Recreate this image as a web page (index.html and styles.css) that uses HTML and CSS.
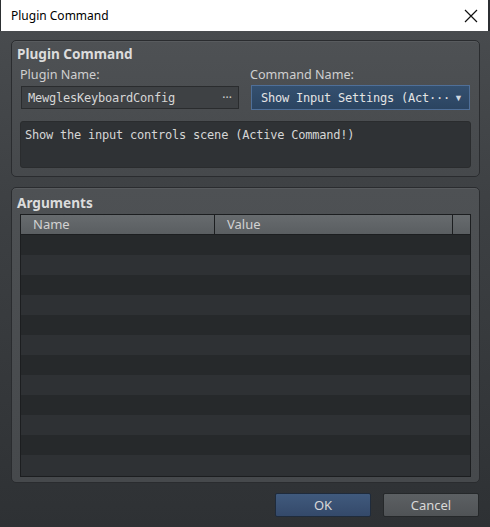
FILE: index.html
```html
<html>
<head>
<link rel="stylesheet" href="styles.css">
</head>
<body>
<div class="window">
    <div class="titlebar">
        <span class="caption">Plugin Command</span>
        <svg class="close" width="14" height="14" viewBox="0 0 14 14"><path d="M1 1 L13 13 M13 1 L1 13" stroke="#111" stroke-width="1.2" fill="none"/></svg>
    </div>
    <div class="dialog">
        <div class="panel command">
            <h2>Plugin Command</h2>
            <div class="fields">
                <div class="field plugin">
                    <label>Plugin Name:</label>
                    <div class="input">
                        <span class="mono">MewglesKeyboardConfig</span>
                        <span class="dots">···</span>
                    </div>
                </div>
                <div class="field cmd">
                    <label>Command Name:</label>
                    <div class="select">
                        <span class="mono">Show Input Settings (Act···</span>
                        <span class="arrow">▼</span>
                    </div>
                </div>
            </div>
            <div class="description mono">Show the input controls scene (Active Command!)</div>
        </div>
        <div class="panel args">
            <h2>Arguments</h2>
            <div class="table">
                <div class="thead">
                    <div class="th name">Name</div>
                    <div class="th value">Value</div>
                    <div class="th corner"></div>
                </div>
                <div class="tbody">
                    <div class="row"></div><div class="row"></div><div class="row"></div>
                    <div class="row"></div><div class="row"></div><div class="row"></div>
                    <div class="row"></div><div class="row"></div><div class="row"></div>
                    <div class="row"></div><div class="row"></div><div class="row"></div>
                </div>
            </div>
        </div>
        <div class="buttons">
            <button class="ok">OK</button>
            <button class="cancel">Cancel</button>
        </div>
    </div>
</div>
</body>
</html>
```

FILE: styles.css
```css
body, html {
    margin: 0;
    padding: 0;
    background: #2c2f32;
}
.window {
    width: 490px;
    height: 527px;
    display: flex;
    flex-direction: column;
    font-family: "Noto Sans", "Open Sans", sans-serif;
    overflow: hidden;
}
.titlebar {
    height: 31px;
    flex: 0 0 31px;
    background: #fff;
    display: flex;
    align-items: center;
    justify-content: space-between;
    padding: 0 10px 0 10px;
    margin: 0 2px 0 1px;
    box-sizing: border-box;
}
.caption {
    font-size: 12px;
    color: #000;
}
.dialog {
    flex: 1;
    background: linear-gradient(to bottom, #484b4e 0%, #3c3f42 40%, #2e3134 100%);
    padding: 9px 10px 0 11px;
    display: flex;
    flex-direction: column;
}
.panel {
    border: 1px solid #2a2c2f;
    border-radius: 5px;
    background: linear-gradient(to bottom, #4e5154 0%, #46494c 100%);
    box-shadow: inset 0 1px 0 rgba(255,255,255,0.06);
    padding: 4px 8px 0 8px;
    box-sizing: border-box;
}
.panel h2 {
    margin: 0 0 0 -3px;
    font-size: 13.6px;
    font-weight: bold;
    color: #dcdcdc;
    line-height: 17px;
}
.command {
    height: 137px;
}
.fields {
    display: flex;
    gap: 12px;
    margin-top: 5px;
}
.field {
    display: flex;
    flex-direction: column;
}
.field label {
    font-size: 12.6px;
    color: #d0d0d0;
    line-height: 16px;
    margin-left: -1px;
}
.plugin {
    width: 218px;
    padding-left: 1px;
}
.cmd {
    width: 219px;
}
.mono {
    font-family: "DejaVu Sans Mono", "Liberation Mono", monospace;
    font-size: 12px;
    letter-spacing: -0.22px;
    color: #d6d6d6;
}
.input {
    margin-top: 3px;
    height: 23px;
    box-sizing: border-box;
    border: 1px solid #2a2c2e;
    background: #3e4144;
    display: flex;
    align-items: center;
    justify-content: space-between;
    padding: 0 6px;
}
.dots {
    color: #cfcfcf;
    font-size: 12px;
}
.select {
    margin-top: 2px;
    height: 25px;
    box-sizing: border-box;
    border: 1px solid #4f6f98;
    background: linear-gradient(to bottom, #34506f 0%, #2b4461 100%);
    display: flex;
    align-items: center;
    justify-content: space-between;
    padding: 0 6px 0 9px;
}
.select .mono {
    color: #e4e4e4;
}
.arrow {
    font-size: 9px;
    color: #d0d8e0;
}
.description {
    margin-top: 11px;
    height: 47px;
    box-sizing: border-box;
    border: 1px solid #2a2c2e;
    border-radius: 3px;
    background: #2f3235;
    padding: 5px 4px;
    line-height: 16px;
}
.args {
    margin-top: 10px;
    height: 296px;
    display: flex;
    flex-direction: column;
}
.args h2 {
    margin-top: 2px;
    margin-bottom: 3px;
}
.table {
    border: 1px solid #1c1e20;
    height: 263px;
    box-sizing: border-box;
    display: flex;
    flex-direction: column;
    overflow: hidden;
}
.thead {
    display: flex;
    height: 20px;
    flex: 0 0 20px;
    background: linear-gradient(to bottom, #676b6e 0%, #5a5e61 100%);
    border-bottom: 1px solid #1c1e20;
    box-sizing: border-box;
}
.th {
    font-size: 13px;
    color: #d2d2d2;
    line-height: 19px;
    padding-left: 12px;
    box-sizing: border-box;
}
.th.name {
    width: 194px;
    border-right: 1px solid #1c1e20;
}
.th.value {
    flex: 1;
    border-right: 1px solid #1c1e20;
}
.th.corner {
    width: 17px;
    padding: 0;
}
.tbody {
    flex: 1;
    background: #2d3033;
}
.row {
    height: 20px;
    background: #2e3134;
}
.row:nth-child(odd) {
    background: #26292b;
}
.buttons {
    display: flex;
    justify-content: flex-end;
    gap: 12px;
    padding-top: 10px;
    padding-right: 1px;
}
.buttons button {
    width: 96px;
    height: 24px;
    font-family: "Noto Sans", "Open Sans", sans-serif;
    font-size: 13px;
    color: #d8d8d8;
    border-radius: 2px;
}
.ok {
    border: 1px solid #1f2b3b;
    background: linear-gradient(to bottom, #405a7d 0%, #34496a 100%);
}
.cancel {
    border: 1px solid #25282a;
    background: linear-gradient(to bottom, #5c6063 0%, #505356 100%);
}
```
